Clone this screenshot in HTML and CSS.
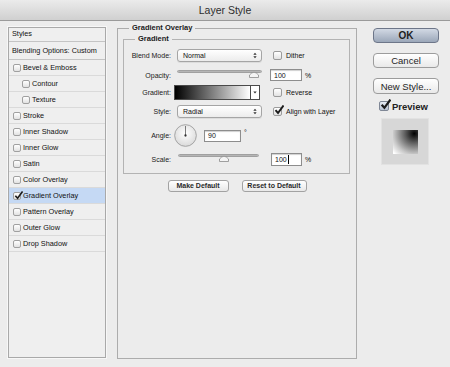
FILE: index.html
```html
<!DOCTYPE html>
<html>
<head>
<meta charset="utf-8">
<title>Layer Style</title>
<link rel="stylesheet" href="styles.css">
</head>
<body>
<div class="titlebar">Layer Style</div>
<div class="content">
  <div class="styles-panel">
    <div class="sp-header">Styles</div>
    <div class="sp-blend">Blending Options: Custom</div>
    <div class="sp-row"><span class="cb"></span>Bevel &amp; Emboss</div>
    <div class="sp-row sub"><span class="cb"></span>Contour</div>
    <div class="sp-row sub"><span class="cb"></span>Texture</div>
    <div class="sp-row"><span class="cb"></span>Stroke</div>
    <div class="sp-row"><span class="cb"></span>Inner Shadow</div>
    <div class="sp-row"><span class="cb"></span>Inner Glow</div>
    <div class="sp-row"><span class="cb"></span>Satin</div>
    <div class="sp-row"><span class="cb"></span>Color Overlay</div>
    <div class="sp-row sel"><span class="cb"><svg viewBox="0 0 10 10" class="tick"><path d="M1.5 5.2 L4 8 L9.5 0.5" /></svg></span>Gradient Overlay</div>
    <div class="sp-row"><span class="cb"></span>Pattern Overlay</div>
    <div class="sp-row"><span class="cb"></span>Outer Glow</div>
    <div class="sp-row last"><span class="cb"></span>Drop Shadow</div>
  </div>

  <fieldset class="main">
    <legend>Gradient Overlay</legend>
    <fieldset class="grad">
      <legend>Gradient</legend>

      <div class="row r-blend">
        <span class="lbl">Blend Mode:</span>
        <div class="select">Normal<svg class="updown" viewBox="0 0 6 10"><path d="M3 1 L5.5 4 H0.5 Z M3 9 L5.5 6 H0.5 Z"/></svg></div>
        <span class="cb2"></span><span class="opt">Dither</span>
      </div>

      <div class="row r-opacity">
        <span class="lbl">Opacity:</span>
        <div class="slider s-opacity"><div class="track"></div><svg class="thumb" style="left:77px" viewBox="0 0 10 7"><path d="M0.5 6.5 V4 Q5 -1.5 9.5 4 V6.5 Z"/></svg></div>
        <div class="input i-opacity">100</div><span class="unit">%</span>
      </div>

      <div class="row r-gradient">
        <span class="lbl">Gradient:</span>
        <div class="swatch"><div class="ramp"></div><div class="drop"><svg viewBox="0 0 6 4"><path d="M0.5 0.5 H5.5 L3 3.5 Z"/></svg></div></div>
        <span class="cb2"></span><span class="opt">Reverse</span>
      </div>

      <div class="row r-style">
        <span class="lbl">Style:</span>
        <div class="select">Radial<svg class="updown" viewBox="0 0 6 10"><path d="M3 1 L5.5 4 H0.5 Z M3 9 L5.5 6 H0.5 Z"/></svg></div>
        <span class="cb2 on"><svg viewBox="0 0 10 10" class="tick"><path d="M1.5 5.2 L4 8 L9.5 0.5" /></svg></span><span class="opt">Align with Layer</span>
      </div>

      <div class="row r-angle">
        <span class="lbl">Angle:</span>
        <svg class="dial" viewBox="0 0 24 24">
          <defs><radialGradient id="dg" cx="50%" cy="40%" r="60%"><stop offset="0" stop-color="#ffffff"/><stop offset="1" stop-color="#dadada"/></radialGradient></defs>
          <circle cx="12" cy="12" r="11.3" fill="url(#dg)" stroke="#9a9a9a" stroke-width="0.9"/>
          <line x1="12" y1="12" x2="12" y2="2" stroke="#555" stroke-width="0.8"/>
          <circle cx="12" cy="12" r="1.2" fill="#333"/>
        </svg>
        <div class="input i-angle">90</div><span class="unit deg">°</span>
      </div>

      <div class="row r-scale">
        <span class="lbl">Scale:</span>
        <div class="slider s-scale"><div class="track"></div><svg class="thumb" style="left:46px" viewBox="0 0 10 7"><path d="M0.5 6.5 V4 Q5 -1.5 9.5 4 V6.5 Z"/></svg></div>
        <div class="input i-scale">100<span class="caret"></span></div><span class="unit">%</span>
      </div>
    </fieldset>

    <div class="btn-row">
      <button class="pbtn b-make">Make Default</button>
      <button class="pbtn b-reset">Reset to Default</button>
    </div>
  </fieldset>

  <div class="side">
    <button class="btn ok">OK</button>
    <button class="btn">Cancel</button>
    <button class="btn newstyle">New Style...</button>
    <div class="preview-row">
      <span class="pcb"><svg viewBox="0 0 10 10" class="tick"><path d="M1.5 5.2 L4 8 L9.5 0.5" /></svg></span>
      <span class="ptxt">Preview</span>
    </div>
    <div class="thumbbox"><div class="thumbsq"></div></div>
  </div>
</div>
</body>
</html>
```

FILE: styles.css
```css
* { box-sizing: border-box; }
html, body { margin: 0; padding: 0; }
body {
  width: 450px;
  height: 367px;
  overflow: hidden;
  background: #ececec;
  font-family: "Liberation Sans", Arial, sans-serif;
  color: #111;
}

.titlebar {
  height: 21px;
  border-bottom: 1px solid #9a9a9a;
  background: linear-gradient(#ebebeb, #d0d0d0);
  text-align: center;
  font-size: 10.5px;
  line-height: 20px;
  color: #2e2e2e;
}

.content {
  display: flex;
  align-items: flex-start;
  padding-left: 8px;
}

/* ---------- left list ---------- */
.styles-panel {
  width: 98px;
  height: 331px;
  margin-top: 6px;
  border: 1px solid #a9a9a9;
  background: #efefef;
  font-size: 7.3px;
  box-shadow: 0 0 0 1px #f7f7f7;
}
.sp-header {
  height: 14px;
  line-height: 12px;
  padding-left: 3px;
  border-bottom: 1px solid #c4c4c4;
}
.sp-blend {
  height: 18px;
  line-height: 17px;
  padding-left: 3px;
  border-bottom: 1px solid #c4c4c4;
}
.sp-row {
  height: 16px;
  display: flex;
  align-items: center;
  padding-left: 4px;
  border-bottom: 1px solid #dadada;
}
.sp-row.sub { padding-left: 13px; }
.sp-row.sel { background: #c5d9f4; }
.cb {
  width: 8px;
  height: 8px;
  flex: none;
  margin-right: 2px;
  border: 1px solid #a0a0a0;
  border-radius: 2px;
  background: linear-gradient(#ffffff, #e2e2e2);
  position: relative;
}
.tick {
  position: absolute;
  left: 0;
  top: -2px;
  width: 9px;
  height: 9px;
  fill: none;
  stroke: #1b1b1b;
  stroke-width: 1.8;
}

/* ---------- main group ---------- */
fieldset {
  margin: 0;
  padding: 0;
  min-width: 0;
  border: 1px solid #acacac;
}
legend {
  margin-left: 11px;
  padding: 0 3px;
  font-weight: bold;
  font-size: 7.5px;
  line-height: 10px;
  color: #1a1a1a;
}
.main {
  width: 240px;
  height: 336px;
  margin: 2px 0 0 11px;
}
.grad {
  width: 227px;
  height: 140px;
  margin: 1px 0 0 5px;
  border-color: #b3b3b3;
}

.row {
  display: flex;
  align-items: center;
  font-size: 7px;
}
.lbl {
  width: 47px;
  flex: none;
  text-align: right;
  color: #1a1a1a;
}
.r-blend { height: 14px; margin-top: 4px; }
.r-opacity { height: 14px; margin-top: 6px; }
.r-gradient { height: 15px; margin-top: 3px; }
.r-style { height: 14px; margin-top: 4px; }
.r-angle { height: 25px; margin-top: 5px; }
.r-scale { height: 14px; margin-top: 4px; }

.select {
  width: 85px;
  height: 13px;
  margin-left: 6px;
  padding-left: 5px;
  display: flex;
  align-items: center;
  justify-content: space-between;
  border: 1px solid #a5a5a5;
  border-radius: 3px;
  background: linear-gradient(#ffffff, #ececec);
  font-size: 7px;
  box-shadow: 0 1px 0 #dcdcdc;
}
.updown {
  width: 4px;
  height: 7px;
  margin-right: 4px;
  fill: #333;
}
.cb2 {
  width: 9px;
  height: 9px;
  flex: none;
  margin-left: 11px;
  margin-right: 4px;
  border: 1px solid #9b9b9b;
  border-radius: 2px;
  background: linear-gradient(#ffffff, #e2e2e2);
  position: relative;
}
.cb2 .tick { width: 10px; height: 10px; top: -3px; left: 0; stroke-width: 1.9; }
.opt { font-size: 7px; }

.slider {
  position: relative;
  height: 14px;
  margin-left: 6px;
}
.s-opacity { width: 85px; }
.s-scale { width: 81px; margin-left: 7px; }
.track {
  margin-top: 2px;
  height: 3px;
  border-radius: 2px;
  background: linear-gradient(#9a9a9a, #d0d0d0);
  border: 1px solid #a0a0a0;
}
.thumb {
  position: absolute;
  top: 3px;
  width: 10px;
  height: 7px;
  fill: #f4f4f4;
  stroke: #8a8a8a;
  stroke-width: 0.8;
}
.s-opacity .thumb { margin-left: -5px; }
.s-scale .thumb { margin-left: -5px; }

.input {
  height: 12px;
  display: flex;
  align-items: center;
  padding-left: 3px;
  border: 1px solid #8d8d8d;
  background: #fff;
  box-shadow: inset 0 1px 1px #d0d0d0;
  font-size: 7px;
}
.i-opacity { width: 32px; margin-left: 8px; }
.i-angle { width: 37px; margin-left: 7px; }
.i-scale { width: 31px; height: 13px; margin-left: 12px; }
.caret {
  width: 1px;
  height: 9px;
  margin-left: 1px;
  background: #000;
}
.unit { margin-left: 3px; font-size: 7px; }
.unit.deg { align-self: flex-start; margin-top: 6px; font-size: 7px; }

.swatch {
  width: 86px;
  height: 15px;
  margin-left: 3px;
  display: flex;
  border: 1px solid #4a4a4a;
  background: #fff;
}
.ramp {
  flex: 1;
  background: linear-gradient(90deg, #000 0%, #ffffff 100%);
  border-right: 1px solid #4a4a4a;
}
.drop {
  width: 8px;
  display: flex;
  align-items: center;
  justify-content: center;
}
.drop svg { width: 4px; height: 3px; fill: #333; }
.r-gradient .cb2 { margin-left: 13px; }

.dial {
  width: 23px;
  height: 23px;
  margin-left: 3px;
  flex: none;
}

.btn-row {
  display: flex;
  justify-content: center;
  gap: 13px;
  margin-top: 6px;
}
.pbtn {
  height: 12px;
  padding: 0;
  border: 1px solid #a2a2a2;
  border-radius: 3px;
  background: linear-gradient(#ffffff, #e8e8e8);
  font-family: inherit;
  font-size: 7px;
  font-weight: bold;
  color: #2a2a2a;
  line-height: 10px;
}
.b-make { width: 61px; }
.b-reset { width: 65px; }

/* ---------- right side ---------- */
.side {
  width: 66px;
  margin: 7px 0 0 16px;
  display: flex;
  flex-direction: column;
}
.btn {
  height: 15px;
  padding: 0;
  border: 1px solid #9c9c9c;
  border-radius: 4px;
  background: linear-gradient(#ffffff, #e9e9e9);
  font-family: inherit;
  font-size: 9.5px;
  line-height: 13px;
  color: #1e1e1e;
}
.btn + .btn { margin-top: 10px; }
.btn.ok {
  background: linear-gradient(#d2d9e4, #9ba7b9);
  border-color: #6d7689;
  font-weight: bold;
  font-size: 10px;
}
.btn.newstyle { height: 16px; }

.preview-row {
  display: flex;
  align-items: center;
  margin-top: 6px;
  height: 12px;
}
.pcb {
  width: 10px;
  height: 10px;
  margin-left: 6px;
  border: 1px solid #7f8796;
  border-radius: 2px;
  background: linear-gradient(#e6ebf3, #b9c3d3);
  position: relative;
}
.pcb .tick { width: 11px; height: 11px; top: -3px; left: 0; stroke-width: 2; }
.ptxt {
  margin-left: 3px;
  font-size: 9.5px;
  font-weight: bold;
  color: #222;
}
.thumbbox {
  width: 48px;
  height: 47px;
  margin: 6px 0 0 8px;
  display: flex;
  align-items: center;
  justify-content: center;
  background: #d7d7d7;
  border: 1px solid #e2e2e2;
}
.thumbsq {
  width: 25px;
  height: 24px;
  background: radial-gradient(circle at 85% 15%, #000 0%, #5a5a5a 30%, #c8c8c8 70%, #ffffff 95%);
}
```
